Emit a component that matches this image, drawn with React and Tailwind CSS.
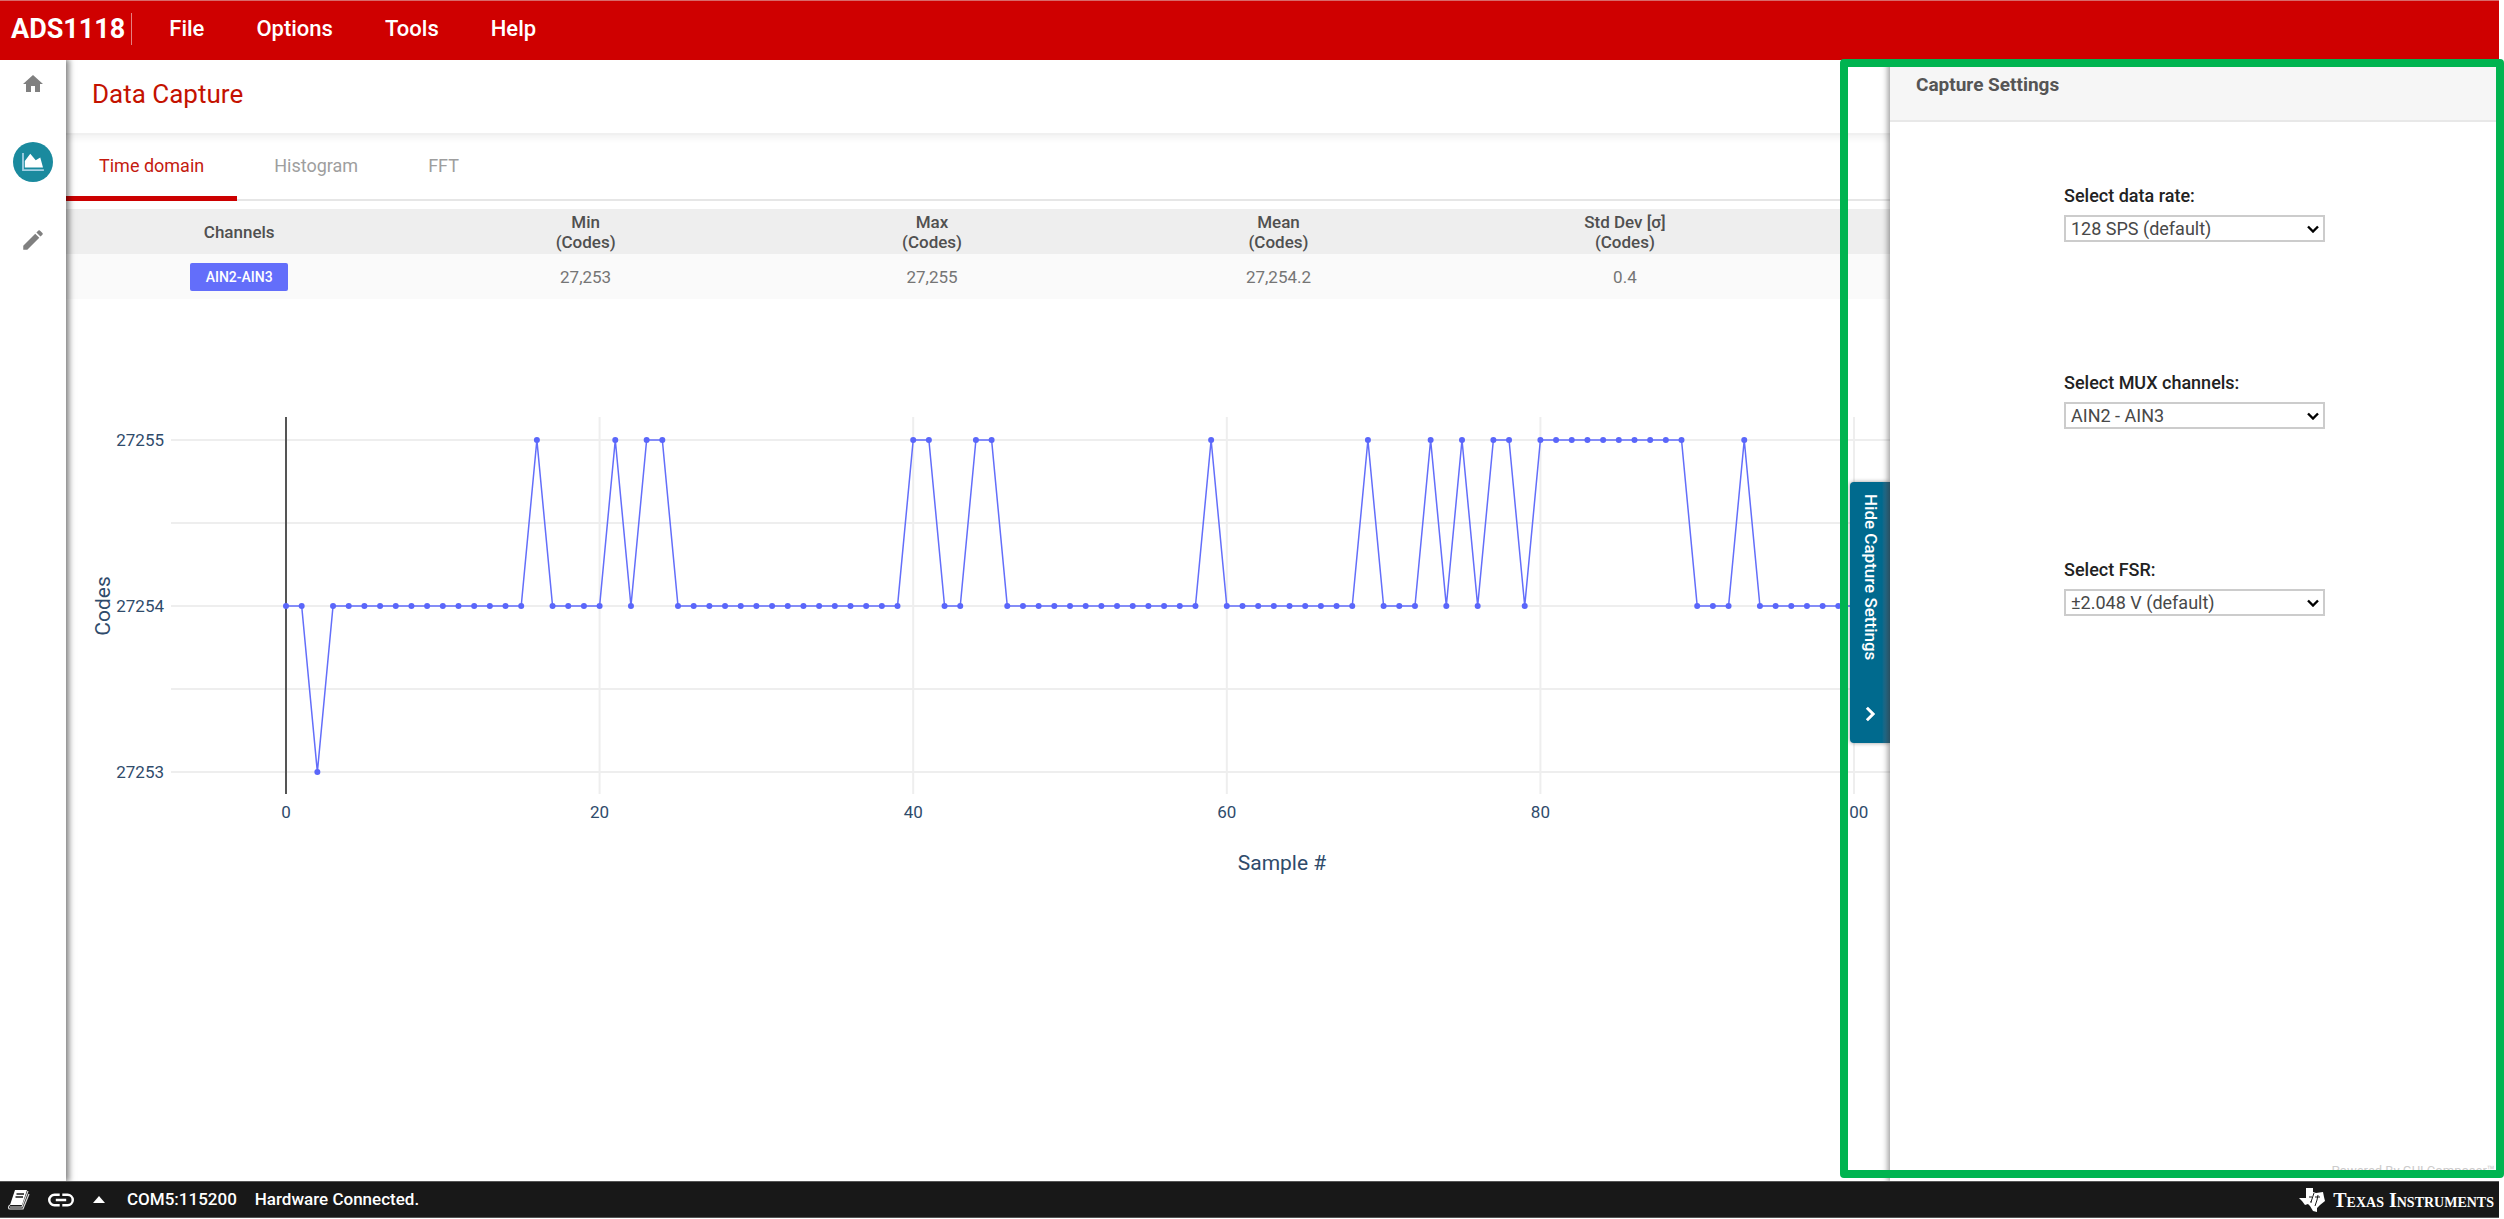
import { useState } from "react";

// ── Data ──────────────────────────────────────────────────────────
const MENUS = ["File", "Options", "Tools", "Help"];
const TABS = ["Time domain", "Histogram", "FFT"];

const COLUMNS = [
  { name: "Min", unit: "(Codes)", value: "27,253" },
  { name: "Max", unit: "(Codes)", value: "27,255" },
  { name: "Mean", unit: "(Codes)", value: "27,254.2" },
  { name: "Std Dev [σ]", unit: "(Codes)", value: "0.4" },
];

const SETTINGS = [
  { id: "rate", label: "Select data rate:", options: ["128 SPS (default)", "8 SPS", "16 SPS", "32 SPS", "64 SPS", "250 SPS", "475 SPS", "860 SPS"] },
  { id: "mux", label: "Select MUX channels:", options: ["AIN2 - AIN3", "AIN0 - AIN1", "AIN0 - AIN3", "AIN1 - AIN3"] },
  { id: "fsr", label: "Select FSR:", options: ["±2.048 V (default)", "±6.144 V", "±4.096 V", "±1.024 V", "±0.512 V", "±0.256 V"] },
];

const HIGH = [16, 21, 23, 24, 40, 41, 44, 45, 59, 69, 73, 75, 77, 78, 80, 81, 82, 83, 84, 85, 86, 87, 88, 89, 93];
const SAMPLES = Array.from({ length: 101 }, (_, i) => (i === 2 ? 27253 : HIGH.includes(i) ? 27255 : 27254));

// ── Icons ─────────────────────────────────────────────────────────
const IconHome = (p) => <svg {...p} viewBox="0 0 24 24" fill="currentColor"><path d="M10 20v-6h4v6h5v-8h3L12 3 2 12h3v8z" /></svg>;
const IconPencil = (p) => <svg {...p} viewBox="0 0 24 24" fill="currentColor"><path d="M3 17.25V21h3.75L17.81 9.94l-3.75-3.75L3 17.25zM20.71 7.04a1 1 0 0 0 0-1.41l-2.34-2.34a1 1 0 0 0-1.41 0l-1.83 1.83 3.75 3.75 1.83-1.83z" /></svg>;
const IconArea = (p) => (
  <svg {...p} viewBox="0 0 24 22">
    <path d="M1 1v19h23" fill="none" stroke="#a3d0e4" strokeWidth="2" />
    <path d="M3 17V10l6-8 6 7 5-3 3 11z" fill="#fff" />
  </svg>
);
const IconBook = (p) => (
  <svg {...p} viewBox="0 0 24 22">
    <path d="M8 1h12l-5 15H3z" fill="#fff" />
    <path d="M9.500 5h7.500M8.500 8h7.500" stroke="#181818" strokeWidth="1.300" />
    <path d="M3 16c-2 1-2 4 0 4h13l6-15M3 18h12l6-16" fill="none" stroke="#ddd" strokeWidth="1.200" />
  </svg>
);
const IconLink = (p) => <svg {...p} viewBox="2 7 20 10" fill="currentColor"><path d="M3.900 12c0-1.710 1.390-3.100 3.100-3.100h4V7H7a5 5 0 0 0 0 10h4v-1.900H7c-1.710 0-3.100-1.390-3.100-3.100zM8 13h8v-2H8v2zm9-6h-4v1.900h4a3.100 3.100 0 0 1 0 6.200h-4V17h4a5 5 0 0 0 0-10z" /></svg>;
const IconCaret = (p) => <svg {...p} viewBox="0 0 12 7" fill="currentColor"><path d="M0 7 6 0l6 7z" /></svg>;
const IconChevron = (p) => <svg {...p} viewBox="0 0 12 8" fill="none" stroke="currentColor" strokeWidth="2.400"><path d="m1 1.500 5 5 5-5" /></svg>;
const IconTexas = (p) => (
  <svg {...p} viewBox="0 0 26 24">
    <path d="M7 0h7v4l3 1 7-1 1 5 1 4-5 4-3 3v4l-4-1-3-5-2-2-3 1-3-4-3-3h7z" fill="#fff" />
    <path d="m15 5-3 9M19 7l-1 5-2 6M10 9h3M16 9h5M11 14h2" stroke="#181818" strokeWidth="1" fill="none" />
  </svg>
);

// ── Top bar ───────────────────────────────────────────────────────
const TopBar = () => (
  <header className="flex h-[60px] shrink-0 items-center border-t border-[#d86a6a] bg-[#cf0000] pb-1 pl-[11px] text-white">
    <h1 className="text-[27px] font-bold leading-8">ADS1118</h1>
    <div className="ml-[6px] h-8 w-px bg-[#e58080]" />
    <nav className="ml-[37px] flex gap-[52px] text-[22px] font-medium">
      {MENUS.map((m) => (
        <button key={m} type="button">{m}</button>
      ))}
    </nav>
  </header>
);

// ── Left rail ─────────────────────────────────────────────────────
const Rail = () => (
  <nav className="z-10 flex w-[66px] shrink-0 flex-col items-center bg-white text-[#808080] shadow-[2px_0_6px_1px_rgba(0,0,0,0.5)]">
    <button type="button" aria-label="Home" className="mt-3">
      <IconHome className="size-6" />
    </button>
    <button type="button" aria-label="Data capture" className="mt-[46px] grid size-10 place-items-center rounded-full bg-[#1a8a9e]">
      <IconArea className="h-5 w-6" />
    </button>
    <button type="button" aria-label="Registers" className="mt-[45px]">
      <IconPencil className="size-[26px]" />
    </button>
  </nav>
);

// ── Statistics table ──────────────────────────────────────────────
const Stats = () => (
  <div className="mt-2 pr-2">
    <table className="w-full table-fixed text-center text-[17px] leading-5">
      <thead>
        <tr className="h-[45px] bg-[#eeeeee] text-[#505050]">
          <th className="font-medium">Channels</th>
          {COLUMNS.map((c) => (
            <th key={c.name} className="font-medium">
              {c.name}
              <br />
              {c.unit}
            </th>
          ))}
          <th colSpan={2} />
        </tr>
      </thead>
      <tbody>
        <tr className="h-[45px] bg-[#fafafa] text-[#757575]">
          <td>
            <span className="inline-block w-[98px] rounded-xs bg-[#636efa] text-[14px] font-medium leading-7 text-white">AIN2-AIN3</span>
          </td>
          {COLUMNS.map((c) => (
            <td key={c.name}>{c.value}</td>
          ))}
          <td colSpan={2} />
        </tr>
      </tbody>
    </table>
  </div>
);

// ── Time domain plot ──────────────────────────────────────────────
const px = (i) => 220 + i * 15.68;
const py = (v) => 307 - (v - 27254) * 166;

const Plot = () => (
  <svg viewBox="0 0 2433 620" className="block w-full" fontFamily="Roboto, sans-serif" fill="#2f4b6b">
    <g stroke="#eeeeee" strokeWidth="2">
      {[27253, 27253.5, 27254, 27254.5, 27255].map((v) => (
        <line key={v} x1="105" x2="2325" y1={py(v)} y2={py(v)} />
      ))}
      {[20, 40, 60, 80, 100, 120].map((i) => (
        <line key={i} x1={px(i)} x2={px(i)} y1="118" y2="495" />
      ))}
    </g>
    <line x1={px(0)} x2={px(0)} y1="118" y2="495" stroke="#555" strokeWidth="2" />
    <polyline points={SAMPLES.map((v, i) => `${px(i)},${py(v)}`).join(" ")} fill="none" stroke="#636efa" strokeWidth="1.500" />
    {SAMPLES.map((v, i) => (
      <circle key={i} cx={px(i)} cy={py(v)} r="3" fill="#5a66fa" />
    ))}
    {[27253, 27254, 27255].map((v) => (
      <text key={v} x="98" y={py(v) + 6} fontSize="17" textAnchor="end">{v}</text>
    ))}
    {[0, 20, 40, 60, 80, 100].map((i) => (
      <text key={i} x={px(i)} y="519" fontSize="17" textAnchor="middle">{i}</text>
    ))}
    <text transform="translate(44 307) rotate(-90)" fontSize="21" textAnchor="middle">Codes</text>
    <text x="1216" y="571" fontSize="21" textAnchor="middle">Sample #</text>
  </svg>
);

// ── Capture settings drawer ───────────────────────────────────────
const Field = ({ id, label, options }) => (
  <div className="flex flex-col">
    <label htmlFor={id} className="text-[18px] font-medium leading-6 text-[#222]">{label}</label>
    <div className="mt-[7px] grid items-center">
      <select id={id} className="col-start-1 row-start-1 h-[27px] w-full appearance-none border-2 border-[#cccccc] bg-white pl-[5px] text-[18px] leading-6 text-[#484848]">
        {options.map((o) => (
          <option key={o}>{o}</option>
        ))}
      </select>
      <IconChevron className="pointer-events-none col-start-1 row-start-1 mr-[6px] h-2 w-3 justify-self-end text-black" />
    </div>
  </div>
);

const Drawer = ({ open, onToggle }) => (
  <div className="absolute inset-y-0 right-0 z-20 flex">
    <button
      type="button"
      onClick={onToggle}
      className="mt-[422px] flex h-[261px] w-10 items-center justify-between rounded-l-sm bg-[#006a8e] bg-linear-to-r from-[#006a8e] from-80% to-[#3a7189] pt-3 pb-6 text-[17px] font-medium text-white shadow-[0_0_4px_rgba(0,0,0,0.4)] [writing-mode:vertical-rl]"
    >
      {open ? "Hide" : "Show"} Capture Settings
      <IconChevron className="h-[10px] w-4 -rotate-90" />
    </button>
    {open && (
      <aside className="w-[609px] bg-white shadow-[-1px_0_6px_1px_rgba(0,0,0,0.4)]">
        <h2 className="h-[62px] border-b-2 border-[#e8e8e8] bg-[#f6f6f6] pt-[13px] pl-[26px] text-[19px] font-bold leading-6 text-[#555]">Capture Settings</h2>
        <form className="mx-auto mt-[62px] flex w-[261px] flex-col gap-[129px]">
          {SETTINGS.map((s) => (
            <Field key={s.id} {...s} />
          ))}
        </form>
      </aside>
    )}
  </div>
);

// ── Status bar ────────────────────────────────────────────────────
const StatusBar = () => (
  <footer className="flex h-[37px] shrink-0 items-center border-y border-[#555] bg-[#181818] pr-[5px] pl-[7px] text-[17px] font-medium text-white">
    <IconBook className="h-[22px] w-6" />
    <IconLink className="ml-[17px] h-[14px] w-[26px]" />
    <IconCaret className="ml-[19px] h-[7px] w-3" />
    <span className="ml-[22px]">COM5:115200</span>
    <span className="ml-[18px]">Hardware Connected.</span>
    <span className="ml-auto flex items-center gap-2 font-['Liberation_Serif',serif] text-[20px] font-bold [font-variant-caps:small-caps]">
      <IconTexas className="h-6 w-[26px]" />
      Texas Instruments
    </span>
  </footer>
);

export default function App() {
  const [open, setOpen] = useState(true);
  const [tab, setTab] = useState("Time domain");

  return (
    <div className="relative flex h-screen flex-col bg-white pr-[5px] pb-px font-[Roboto,sans-serif]">
      <TopBar />
      <div className="relative flex min-h-0 flex-1 overflow-hidden">
        <Rail />
        <main className="min-w-0 flex-1">
          <h2 className="h-[75px] border-b-2 border-[#f0f0f0] pt-4 pl-[26px] text-[26px] leading-9 text-[#c41200] shadow-[0_3px_7px_rgba(0,0,0,0.06)]">Data Capture</h2>
          <div role="tablist" className="flex h-[66px] gap-1 border-b-2 border-[#e6e6e6] text-[18px]">
            {TABS.map((t) => (
              <button
                key={t}
                type="button"
                role="tab"
                aria-selected={t === tab}
                onClick={() => setTab(t)}
                className={`-mb-0.5 border-b-5 px-[33px] ${t === tab ? "border-[#cc0000] text-[#c41a10]" : "border-transparent text-[#9e9e9e]"}`}
              >
                {t}
              </button>
            ))}
          </div>
          <Stats />
          <Plot />
        </main>
        <Drawer open={open} onToggle={() => setOpen(!open)} />
        <span className="absolute right-1 bottom-0 z-20 text-[13px] leading-5 text-[#ccc]">Powered By GUI Composer™</span>
      </div>
      <StatusBar />
      {/* highlight frame round the settings drawer */}
      <div className="pointer-events-none absolute top-[59px] right-0 bottom-[41px] z-30 w-[664px] rounded-sm border-8 border-[#00b450]" />
    </div>
  );
}
